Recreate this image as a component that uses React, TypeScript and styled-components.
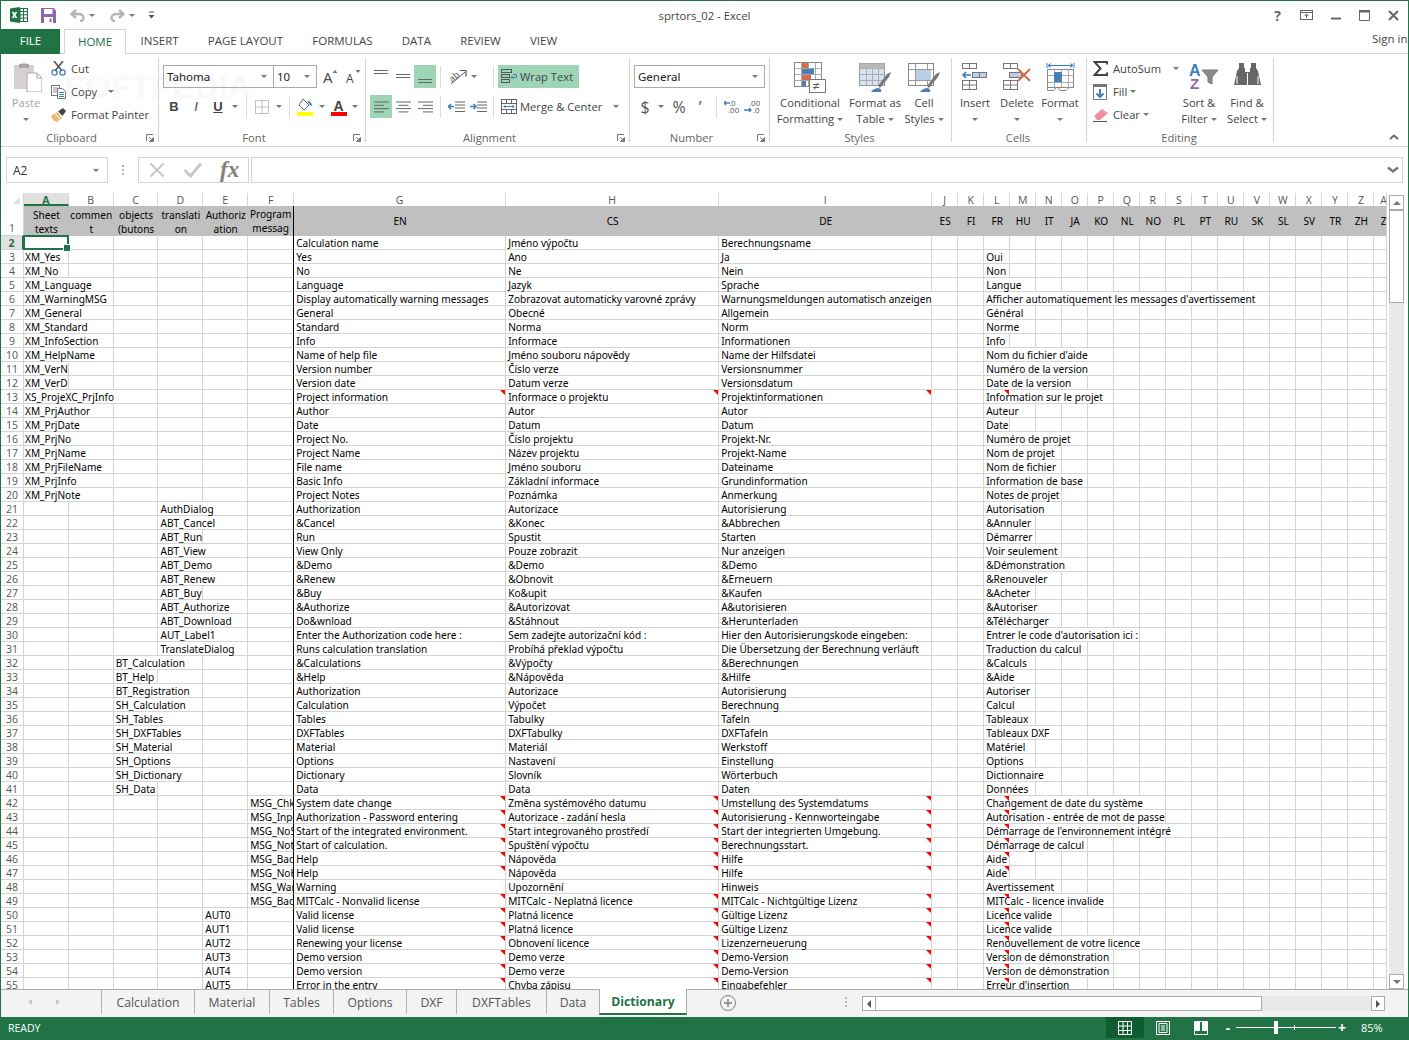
import { Fragment, ReactNode } from 'react'
import styled, { createGlobalStyle, css } from 'styled-components'

const GlobalStyle = createGlobalStyle`
  html, body { margin: 0; padding: 0; background: #fff; }
  * { box-sizing: border-box; }
`

const UI_FONT = '"Open Sans", "Noto Sans", "Liberation Sans", sans-serif'
const CELL_FONT = '"Noto Sans", "DejaVu Sans", "Liberation Sans", sans-serif'
const GREEN = '#217346'

/* ---------- sheet data ---------- */

// [column holding the key, key, EN, CS, DE, FR]
const rows: string[][] = [
  ['', '', 'Calculation name', 'Jméno výpočtu', 'Berechnungsname', ''],
  ['A', 'XM_Yes', 'Yes', 'Ano', 'Ja', 'Oui'],
  ['A', 'XM_No', 'No', 'Ne', 'Nein', 'Non'],
  ['A', 'XM_Language', 'Language', 'Jazyk', 'Sprache', 'Langue'],
  ['A', 'XM_WarningMSG', 'Display automatically warning messages', 'Zobrazovat automaticky varovné zprávy', 'Warnungsmeldungen automatisch anzeigen', "Afficher automatiquement les messages d'avertissement"],
  ['A', 'XM_General', 'General', 'Obecné', 'Allgemein', 'Général'],
  ['A', 'XM_Standard', 'Standard', 'Norma', 'Norm', 'Norme'],
  ['A', 'XM_InfoSection', 'Info', 'Informace', 'Informationen', 'Info'],
  ['A', 'XM_HelpName', 'Name of help file', 'Jméno souboru nápovědy', 'Name der Hilfsdatei', "Nom du fichier d'aide"],
  ['A', 'XM_VerN', 'Version number', 'Číslo verze', 'Versionsnummer', 'Numéro de la version'],
  ['A', 'XM_VerD', 'Version date', 'Datum verze', 'Versionsdatum', 'Date de la version'],
  ['A', 'XS_ProjeXC_PrjInfo', 'Project information', 'Informace o projektu', 'Projektinformationen', 'Information sur le projet'],
  ['A', 'XM_PrjAuthor', 'Author', 'Autor', 'Autor', 'Auteur'],
  ['A', 'XM_PrjDate', 'Date', 'Datum', 'Datum', 'Date'],
  ['A', 'XM_PrjNo', 'Project No.', 'Číslo projektu', 'Projekt-Nr.', 'Numéro de projet'],
  ['A', 'XM_PrjName', 'Project Name', 'Název projektu', 'Projekt-Name', 'Nom de projet'],
  ['A', 'XM_PrjFileName', 'File name', 'Jméno souboru', 'Dateiname', 'Nom de fichier'],
  ['A', 'XM_PrjInfo', 'Basic Info', 'Základní informace', 'Grundinformation', 'Information de base'],
  ['A', 'XM_PrjNote', 'Project Notes', 'Poznámka', 'Anmerkung', 'Notes de projet'],
  ['D', 'AuthDialog', 'Authorization', 'Autorizace', 'Autorisierung', 'Autorisation'],
  ['D', 'ABT_Cancel', '&Cancel', '&Konec', '&Abbrechen', '&Annuler'],
  ['D', 'ABT_Run', 'Run', 'Spustit', 'Starten', 'Démarrer'],
  ['D', 'ABT_View', 'View Only', 'Pouze zobrazit', 'Nur anzeigen', 'Voir seulement'],
  ['D', 'ABT_Demo', '&Demo', '&Demo', '&Demo', '&Démonstration'],
  ['D', 'ABT_Renew', '&Renew', '&Obnovit', '&Erneuern', '&Renouveler'],
  ['D', 'ABT_Buy', '&Buy', 'Ko&upit', '&Kaufen', '&Acheter'],
  ['D', 'ABT_Authorize', '&Authorize', '&Autorizovat', 'A&utorisieren', '&Autoriser'],
  ['D', 'ABT_Download', 'Do&wnload', '&Stáhnout', '&Herunterladen', '&Télécharger'],
  ['D', 'AUT_Label1', 'Enter the Authorization code here :', 'Sem zadejte autorizační kód :', 'Hier den Autorisierungskode eingeben:', "Entrer le code d'autorisation ici :"],
  ['D', 'TranslateDialog', 'Runs calculation translation', 'Probíhá překlad výpočtu', 'Die Übersetzung der Berechnung verläuft', 'Traduction du calcul'],
  ['C', 'BT_Calculation', '&Calculations', '&Výpočty', '&Berechnungen', '&Calculs'],
  ['C', 'BT_Help', '&Help', '&Nápověda', '&Hilfe', '&Aide'],
  ['C', 'BT_Registration', 'Authorization', 'Autorizace', 'Autorisierung', 'Autoriser'],
  ['C', 'SH_Calculation', 'Calculation', 'Výpočet', 'Berechnung', 'Calcul'],
  ['C', 'SH_Tables', 'Tables', 'Tabulky', 'Tafeln', 'Tableaux'],
  ['C', 'SH_DXFTables', 'DXFTables', 'DXFTabulky', 'DXFTafeln', 'Tableaux DXF'],
  ['C', 'SH_Material', 'Material', 'Materiál', 'Werkstoff', 'Matériel'],
  ['C', 'SH_Options', 'Options', 'Nastavení', 'Einstellung', 'Options'],
  ['C', 'SH_Dictionary', 'Dictionary', 'Slovník', 'Wörterbuch', 'Dictionnaire'],
  ['C', 'SH_Data', 'Data', 'Data', 'Daten', 'Données'],
  ['F', 'MSG_ChkDate', 'System date change', 'Změna systémového datumu', 'Umstellung des Systemdatums', 'Changement de date du système'],
  ['F', 'MSG_InpPass', 'Authorization - Password entering', 'Autorizace - zadání hesla', 'Autorisierung - Kennworteingabe', 'Autorisation - entrée de mot de passe'],
  ['F', 'MSG_NoStart', 'Start of the integrated environment.', 'Start integrovaného prostředí', 'Start der integrierten Umgebung.', "Démarrage de l'environnement intégré"],
  ['F', 'MSG_NotCalc', 'Start of calculation.', 'Spuštění výpočtu', 'Berechnungsstart.', 'Démarrage de calcul'],
  ['F', 'MSG_BadHelp', 'Help', 'Nápověda', 'Hilfe', 'Aide'],
  ['F', 'MSG_NoHelp', 'Help', 'Nápověda', 'Hilfe', 'Aide'],
  ['F', 'MSG_Warning', 'Warning', 'Upozornění', 'Hinweis', 'Avertissement'],
  ['F', 'MSG_BadLic', 'MITCalc - Nonvalid license', 'MITCalc - Neplatná licence', 'MITCalc - Nichtgültige Lizenz', 'MITCalc - licence invalide'],
  ['E', 'AUT0', 'Valid license', 'Platná licence', 'Gültige Lizenz', 'Licence valide'],
  ['E', 'AUT1', 'Valid license', 'Platná licence', 'Gültige Lizenz', 'Licence valide'],
  ['E', 'AUT2', 'Renewing your license', 'Obnovení licence', 'Lizenzerneuerung', 'Renouvellement de votre licence'],
  ['E', 'AUT3', 'Demo version', 'Demo verze', 'Demo-Version', 'Version de démonstration'],
  ['E', 'AUT4', 'Demo version', 'Demo verze', 'Demo-Version', 'Version de démonstration'],
  ['E', 'AUT5', 'Error in the entry', 'Chyba zápisu', 'Eingabefehler', "Erreur d'insertion"],
]

const columns = 'A B C D E F G H I J K L M N O P Q R S T U V W X Y Z AA'.split(' ')
const languages = 'ES FI FR HU IT JA KO NL NO PL PT RU SK SL SV TR ZH ZH'.split(' ')
const headLabels = ['Sheet\ntexts', 'commen\nt', 'objects\n(butons', 'translati\non', 'Authoriz\nation', 'Program\nmessag']
const noteRows = [13, 42, 43, 44, 45, 46, 47, 49, 50, 51, 52, 53, 54, 55]

/* ---------- window chrome ---------- */

const Window = styled.div`
  width: 1409px;
  height: 1040px;
  overflow: hidden;
  display: flex;
  flex-direction: column;
  position: relative;
  border: 1px solid ${GREEN};
  border-bottom: none;
  font-family: ${UI_FONT};
  color: #444;
  background: #fff;
`

const TitleBar = styled.div`
  height: 28px;
  flex: none;
  display: grid;
  grid-template-columns: 1fr auto 1fr;
  align-items: center;
`

const QuickAccess = styled.div`
  display: flex;
  align-items: center;
  padding-left: 8px;
`

const QuickSlot = styled.div<{ $w: number; $gap?: number }>`
  width: ${(p) => p.$w}px;
  margin-left: ${(p) => p.$gap ?? 0}px;
  height: 24px;
  display: flex;
  align-items: center;
  justify-content: center;
`

const WindowTitle = styled.div`
  font-size: 11.3px;
  color: #444;
`

const WindowControls = styled.div`
  display: flex;
  justify-content: flex-end;
`

const WindowButton = styled.div`
  width: 29px;
  height: 24px;
  display: flex;
  align-items: center;
  justify-content: center;
  color: #666;
  font-weight: 700;
  font-size: 14px;
`

const TabBar = styled.div`
  height: 25px;
  flex: none;
  display: flex;
  align-items: stretch;
  border-bottom: 1px solid #d4d4d4;
  font-size: 11.5px;
`

const FileTab = styled.div`
  width: 59px;
  height: 25px;
  padding-bottom: 2px;
  background: ${GREEN};
  color: #fff;
  display: flex;
  align-items: center;
  justify-content: center;
  margin-right: 4px;
`

const RibbonTab = styled.div<{ $active?: boolean }>`
  padding: 0 14.6px 2px;
  display: flex;
  align-items: center;
  height: 25px;
  color: #444;
  white-space: nowrap;
  ${(p) =>
    p.$active &&
    css`
      color: ${GREEN};
      background: #fff;
      border: 1px solid #d4d4d4;
      border-bottom: none;
      width: 62px;
      padding: 0 0 1px;
      justify-content: center;
    `}
`

const SignIn = styled.div`
  margin-left: auto;
  padding-bottom: 6px;
  display: flex;
  align-items: center;
  color: #444;
  white-space: nowrap;
  width: 36px;
`

/* ---------- ribbon ---------- */

const Ribbon = styled.div`
  height: 93px;
  flex: none;
  display: flex;
  padding-top: 4px;
  border-bottom: 1px solid #d4d4d4;
  position: relative;
  font-size: 11.2px;
`

const Watermark = styled.div`
  position: absolute;
  left: 63px;
  top: 15px;
  font-size: 32px;
  font-weight: 700;
  letter-spacing: 0.5px;
  font-family: "Liberation Sans", sans-serif;
  color: rgba(255, 255, 255, 0.6);
  text-shadow: 0 0 1px rgba(228, 228, 228, 0.5);
  pointer-events: none;
  line-height: 36px;
`

const Group = styled.div<{ $w: number }>`
  width: ${(p) => p.$w}px;
  height: 84px;
  flex: none;
  display: flex;
  flex-direction: column;
  border-right: 1px solid #d4d4d4;
  position: relative;
`

const GroupBody = styled.div<{ $pad?: number }>`
  height: 73px;
  flex: none;
  display: flex;
  padding-left: ${(p) => p.$pad ?? 0}px;
`

const GroupLabel = styled.div<{ $launch?: boolean }>`
  height: 14px;
  line-height: 14px;
  font-size: 11.2px;
  color: #666;
  text-align: center;
  padding-right: ${(p) => (p.$launch ? 16 : 2)}px;
`

const Launcher = styled.div`
  position: absolute;
  right: 4px;
  bottom: 0;
  width: 8px;
  height: 8px;
  display: flex;
`

const ToolRows = styled.div`
  display: flex;
  flex-direction: column;
  gap: 7px;
  padding-top: 7px;
`

const ToolRow = styled.div`
  display: flex;
  height: 23px;
  align-items: center;
`

const Tool = styled.div<{ $w: number; $active?: boolean }>`
  width: ${(p) => p.$w}px;
  height: 23px;
  flex: none;
  display: flex;
  align-items: center;
  justify-content: center;
  background: ${(p) => (p.$active ? '#9fd5b7' : 'transparent')};
`

const Sep = styled.div<{ $w: number }>`
  width: ${(p) => p.$w}px;
  height: 22px;
  flex: none;
  display: flex;
  justify-content: center;
  &::before {
    content: '';
    width: 1px;
    background: #dcdcdc;
  }
`

const Caret = styled.span<{ $gap?: number }>`
  display: inline-block;
  width: 0;
  height: 0;
  flex: none;
  margin-left: ${(p) => p.$gap ?? 0}px;
  border-left: 3px solid transparent;
  border-right: 3px solid transparent;
  border-top: 3px solid #777;
`

const Select = styled.div<{ $w: number; $joined?: boolean }>`
  width: ${(p) => p.$w}px;
  height: 23px;
  flex: none;
  display: flex;
  align-items: center;
  justify-content: space-between;
  padding: 0 6px 0 3px;
  border: 1px solid #ababab;
  margin-left: ${(p) => (p.$joined ? -1 : 0)}px;
  font-family: "Noto Sans", Tahoma, sans-serif;
  font-size: 11.5px;
  color: #222;
`

const TextTool = styled.div<{ $w: number; $active?: boolean }>`
  width: ${(p) => p.$w}px;
  height: 23px;
  flex: none;
  display: flex;
  align-items: center;
  padding-left: 3px;
  gap: 3px;
  white-space: nowrap;
  background: ${(p) => (p.$active ? '#9fd5b7' : 'transparent')};
`

const SmallColumn = styled.div<{ $w: number; $pad?: number }>`
  width: ${(p) => p.$w}px;
  flex: none;
  margin-top: -1px;
  padding-left: ${(p) => p.$pad ?? 0}px;
  display: flex;
  flex-direction: column;
`

const SmallButton = styled.div`
  height: 23px;
  display: flex;
  align-items: center;
  white-space: nowrap;
`

const SmallIcon = styled.div`
  width: 20px;
  flex: none;
  display: flex;
  align-items: center;
  justify-content: flex-start;
`

const LargeButton = styled.div<{ $w: number; $muted?: boolean }>`
  width: ${(p) => p.$w}px;
  flex: none;
  padding-top: 4px;
  display: flex;
  flex-direction: column;
  align-items: center;
  color: ${(p) => (p.$muted ? '#a6a6a6' : '#444')};
`

const LargeIcon = styled.div`
  height: 33px;
  display: flex;
  align-items: flex-start;
  justify-content: center;
`

const LargeLine = styled.div`
  height: 16px;
  line-height: 16px;
  white-space: nowrap;
  display: flex;
  align-items: center;
  gap: 3px;
`

const Collapse = styled.div`
  margin-left: auto;
  align-self: flex-end;
  padding: 0 9px 0 0;
  height: 14px;
  display: flex;
  align-items: center;
  position: relative;
  top: -2px;
`

/* ---------- formula bar ---------- */

const FormulaBar = styled.div`
  height: 46px;
  flex: none;
  padding: 10px 5px 10px 5px;
  display: flex;
  align-items: stretch;
`

const NameBox = styled.div`
  width: 102px;
  border: 1px solid #d4d4d4;
  display: flex;
  align-items: center;
  justify-content: space-between;
  padding: 0 8px 0 6px;
  font-size: 12px;
  color: #333;
`

const Grip = styled.div`
  width: 30px;
  display: flex;
  flex-direction: column;
  align-items: center;
  justify-content: center;
  gap: 2px;
  span {
    width: 2px;
    height: 2px;
    background: #b4b4b4;
  }
`

const FxBox = styled.div`
  width: 111px;
  border: 1px solid #d4d4d4;
  display: flex;
  align-items: center;
  padding-left: 10px;
  gap: 18px;
`

const FxLabel = styled.span`
  font-family: "Liberation Serif", serif;
  font-style: italic;
  font-weight: 700;
  font-size: 23px;
  line-height: 24px;
  color: #808080;
`

const FormulaInput = styled.div`
  flex: 1;
  margin-left: 2px;
  border: 1px solid #d4d4d4;
  display: flex;
  align-items: center;
  justify-content: flex-end;
  padding-right: 3px;
`

/* ---------- sheet ---------- */

const SheetArea = styled.div`
  height: 796px;
  flex: none;
  display: flex;
`

const Sheet = styled.div`
  width: 1386px;
  height: 796px;
  flex: none;
  overflow: hidden;
  border-right: 1px solid #d4d4d4;
`

const SheetGrid = styled.div`
  display: grid;
  grid-template-columns: 23px repeat(5, 44.83px) 46px 212px repeat(2, 213px) repeat(18, 26.03px);
  grid-template-rows: 13px 30px repeat(54, 14px);
  font-family: ${CELL_FONT};
  font-size: 10.1px;
  color: #000;
`

const Corner = styled.div`
  border-right: 1px solid #d4d4d4;
  position: relative;
  &::after {
    content: '';
    position: absolute;
    right: 3px;
    bottom: 2px;
    border-left: 7px solid transparent;
    border-bottom: 7px solid #dfdfdf;
  }
`

const ColHead = styled.div<{ $active?: boolean }>`
  text-align: center;
  font-family: ${UI_FONT};
  font-size: 10.5px;
  line-height: 15px;
  overflow: hidden;
  color: ${(p) => (p.$active ? GREEN : '#555')};
  font-weight: ${(p) => (p.$active ? 700 : 400)};
  background: ${(p) => (p.$active ? '#e1e1e1' : '#fff')};
  border-right: 1px solid #d4d4d4;
  border-bottom: ${(p) => (p.$active ? `2px solid ${GREEN}` : 'none')};
`

const RowHead = styled.div<{ $active?: boolean; $tall?: boolean }>`
  display: flex;
  align-items: flex-start;
  justify-content: center;
  padding-top: ${(p) => (p.$tall ? 15 : 0)}px;
  font-family: ${UI_FONT};
  font-size: 10.5px;
  line-height: 15px;
  overflow: hidden;
  color: ${(p) => (p.$active ? GREEN : '#555')};
  font-weight: ${(p) => (p.$active ? 700 : 400)};
  background: ${(p) => (p.$active ? '#e1e1e1' : '#fff')};
  border-right: ${(p) => (p.$active ? `2px solid ${GREEN}` : '1px solid #d4d4d4')};
  border-bottom: 1px solid #d4d4d4;
`

const BandCell = styled.div<{ $edge?: boolean; $middle?: boolean }>`
  background: #c0c0c0;
  display: flex;
  align-items: ${(p) => (p.$middle ? 'center' : 'flex-end')};
  justify-content: center;
  text-align: center;
  white-space: pre-line;
  line-height: 14px;
  overflow: hidden;
  padding-bottom: ${(p) => (p.$edge ? 1 : 0)}px;
  border-right: ${(p) => (p.$edge ? '1px solid #000' : 'none')};
`

const Cell = styled.div<{ $clip?: boolean; $edge?: boolean; $note?: boolean; $anchor?: boolean; $pad?: number }>`
  position: ${(p) => (p.$note || p.$anchor ? 'relative' : 'static')};
  padding-left: ${(p) => p.$pad ?? 2}px;
  line-height: 13px;
  white-space: nowrap;
  overflow: ${(p) => (p.$clip ? 'hidden' : 'visible')};
  border-right: 1px solid ${(p) => (p.$edge ? '#000' : '#d4d4d4')};
  border-bottom: 1px solid #d4d4d4;
  ${(p) =>
    p.$note &&
    css`
      &::after {
        content: '';
        position: absolute;
        z-index: 2;
        top: 0;
        right: 0;
        border-left: 5px solid transparent;
        border-top: 5px solid #f00;
      }
    `}
`

// white plate that hides the gridlines of the empty cells a long text runs over
const CellMask = styled.span`
  position: relative;
  display: inline-block;
  height: 13px;
  vertical-align: top;
  background: #fff;
`

// the ink sits above every plate, so a row's plate can't eat the descenders of the row above
const CellInk = styled.span`
  position: relative;
  z-index: 1;
  display: block;
  line-height: 15px;
  height: 13px;
`

const Selection = styled.div`
  position: absolute;
  z-index: 3;
  left: -1px;
  top: -1px;
  width: 46px;
  height: 15px;
  border: 2px solid ${GREEN};
  &::after {
    content: '';
    position: absolute;
    right: -4px;
    bottom: -4px;
    width: 6px;
    height: 6px;
    background: ${GREEN};
    border: 1px solid #fff;
  }
`

const VScroll = styled.div`
  width: 15px;
  margin: 2px 0 0 2px;
  background: #e9e9e9;
  display: flex;
  flex-direction: column;
`

const ScrollEnd = styled.div<{ $w?: number; $h?: number }>`
  width: ${(p) => (p.$w ? `${p.$w}px` : 'auto')};
  height: ${(p) => (p.$h ? `${p.$h}px` : 'auto')};
  background: #fff;
  border: 1px solid #ababab;
  flex: none;
  display: flex;
  align-items: center;
  justify-content: center;
`

const Arrow = styled.span<{ $dir: 'up' | 'down' | 'left' | 'right' }>`
  width: 0;
  height: 0;
  ${(p) =>
    p.$dir === 'up' &&
    css`
      border-left: 4px solid transparent;
      border-right: 4px solid transparent;
      border-bottom: 4px solid #777;
    `}
  ${(p) =>
    p.$dir === 'down' &&
    css`
      border-left: 4px solid transparent;
      border-right: 4px solid transparent;
      border-top: 4px solid #777;
    `}
  ${(p) =>
    p.$dir === 'left' &&
    css`
      border-top: 4px solid transparent;
      border-bottom: 4px solid transparent;
      border-right: 4px solid #555;
    `}
  ${(p) =>
    p.$dir === 'right' &&
    css`
      border-top: 4px solid transparent;
      border-bottom: 4px solid transparent;
      border-left: 4px solid #555;
    `}
`

const VThumb = styled.div`
  height: 93px;
  background: #fff;
  border: 1px solid #ababab;
  flex: none;
`

const ScrollFill = styled.div`
  flex: 1;
`

/* ---------- sheet tabs and status bar ---------- */

const SheetTabs = styled.div`
  height: 28px;
  flex: none;
  display: flex;
  align-items: flex-start;
  background: #f3f3f3;
  border-top: 1px solid #ababab;
  font-size: 12.2px;
`

const TabNav = styled.div`
  width: 100px;
  height: 24px;
  display: flex;
  align-items: center;
  gap: 24px;
  padding-left: 27px;
  flex: none;
`

const NavArrow = styled.span<{ $next?: boolean }>`
  width: 0;
  height: 0;
  border-top: 3px solid transparent;
  border-bottom: 3px solid transparent;
  ${(p) => (p.$next ? 'border-left: 4px solid #c4c4c4;' : 'border-right: 4px solid #c4c4c4;')}
`

const SheetTab = styled.div<{ $active?: boolean; $w?: number }>`
  height: 24px;
  width: ${(p) => p.$w}px;
  display: flex;
  align-items: center;
  justify-content: center;
  white-space: nowrap;
  color: #555;
  border-left: 1px solid #b4b4b4;
  flex: none;
  ${(p) =>
    p.$active &&
    css`
      position: relative;
      top: -1px;
      height: 26px;
      padding-top: 1px;
      background: #fff;
      color: ${GREEN};
      font-weight: 700;
      border-left: 1px solid #ababab;
      border-right: 1px solid #ababab;
      border-bottom: 2px solid ${GREEN};
    `}
`

const AddSheet = styled.div`
  width: 16px;
  height: 16px;
  margin: 5px 0 0 33px;
  border: 1px solid #808080;
  border-radius: 50%;
  display: flex;
  align-items: center;
  justify-content: center;
  flex: none;
`

const TabGrip = styled(Grip)`
  width: 4px;
  height: 24px;
  margin-left: 108px;
  flex: none;
`

const HScroll = styled.div`
  width: 523px;
  height: 15px;
  margin: 6px 0 0 14px;
  flex: none;
  display: flex;
  background: #e9e9e9;
`

const HThumb = styled.div`
  width: 386px;
  background: #fff;
  border: 1px solid #ababab;
  border-left: none;
  flex: none;
`

const StatusBar = styled.div`
  height: 23px;
  flex: none;
  background: ${GREEN};
  color: #fff;
  display: flex;
  align-items: center;
  font-size: 10.5px;
  padding: 0 0 2px 7px;
`

const StatusRight = styled.div`
  margin-left: auto;
  display: flex;
  align-items: center;
  height: 23px;
`

const ViewButton = styled.div<{ $active?: boolean }>`
  width: 38px;
  height: 21px;
  display: flex;
  align-items: center;
  justify-content: center;
  background: ${(p) => (p.$active ? '#0e5c2f' : 'transparent')};
`

const ZoomSlider = styled.div`
  display: flex;
  align-items: center;
  margin-left: 4px;
`

const ZoomSign = styled.span`
  font-weight: 700;
  font-size: 14px;
  width: 8px;
  text-align: center;
`

const ZoomTrack = styled.div`
  width: 100px;
  height: 1px;
  margin: 0 2px 0 4px;
  background: #fff;
  position: relative;
`

const ZoomThumb = styled.div`
  position: absolute;
  left: 38px;
  top: -6px;
  width: 4px;
  height: 13px;
  background: #fff;
`

const ZoomTick = styled.div`
  position: absolute;
  left: 58px;
  top: -2px;
  width: 1px;
  height: 5px;
  background: #fff;
`

const ZoomValue = styled.div`
  width: 47px;
  margin-left: 15px;
  font-size: 11px;
  color: #fff;
`

/* ---------- icons ---------- */

const Svg = ({ w, h, children }: { w: number; h: number; children: ReactNode }) => (
  <svg width={w} height={h} viewBox={`0 0 ${w} ${h}`} style={{ display: 'block', flex: 'none' }}>
    {children}
  </svg>
)

const ExcelLogo = () => (
  <Svg w={18} h={16}>
    <rect x="6.5" y="1.5" width="11" height="13" fill="#fff" stroke="#217346" />
    <path d="M10 1.5v13M13.5 1.5v13M7 4.5h10M7 7.8h10M7 11.1h10" stroke="#217346" strokeWidth="1" />
    <path d="M0 1.5L10 0v16L0 14.5z" fill="#217346" />
    <path d="M2.5 5l4 6M6.5 5l-4 6" stroke="#fff" strokeWidth="1.6" />
  </Svg>
)

const SaveIcon = () => (
  <Svg w={15} h={15}>
    <path d="M0 0h12.5L15 2.5V15H0z" fill="#8e64b0" />
    <rect x="3" y="1" width="8.5" height="5" fill="#fff" />
    <rect x="3" y="9" width="9" height="6" fill="#fff" />
    <rect x="8.5" y="10.5" width="2" height="3.5" fill="#8e64b0" />
  </Svg>
)

const UndoIcon = ({ flip }: { flip?: boolean }) => (
  <Svg w={15} h={13}>
    <g transform={flip ? 'translate(15 0) scale(-1 1)' : undefined}>
      <path d="M6 1L1.5 5 6 9" fill="none" stroke="#b4b4b4" strokeWidth="2.4" />
      <path d="M2 5h7c3 0 4.5 2 4.5 4S12 12 10 12.5" fill="none" stroke="#b4b4b4" strokeWidth="2.4" />
    </g>
  </Svg>
)

const CustomizeIcon = () => (
  <Svg w={7} h={8}>
    <path d="M1 1h5" stroke="#555" />
    <path d="M0.5 4h6L3.5 7.5z" fill="#555" />
  </Svg>
)

const PasteIcon = () => (
  <Svg w={32} h={30}>
    <g transform="translate(3 0)">
      <path d="M1 3h7V1h6v2h7v24H1z" fill="#d6d2d4" />
      <rect x="6" y="2" width="10" height="4" fill="#a8a6a8" />
      <path d="M14 11h10l5 5v14H14z" fill="#fff" stroke="#a6a6a6" />
      <path d="M24 11v5h5" fill="none" stroke="#a6a6a6" />
    </g>
  </Svg>
)

const CutIcon = () => (
  <Svg w={15} h={15}>
    <path d="M3 0l8 10M12 0L4 10" stroke="#555" strokeWidth="1.6" />
    <circle cx="3.5" cy="11.5" r="2.6" fill="none" stroke="#3f7fc0" strokeWidth="1.3" />
    <circle cx="11.5" cy="11.5" r="2.6" fill="none" stroke="#3f7fc0" strokeWidth="1.3" />
  </Svg>
)

const CopyIcon = () => (
  <Svg w={15} h={14}>
    <rect x="0.5" y="0.5" width="8" height="10" fill="#fff" stroke="#777" />
    <path d="M2 3h5M2 5h5M2 7h5" stroke="#999" />
    <path d="M6.5 3.5h5l3 3v7h-8z" fill="#fff" stroke="#777" />
    <path d="M8 7.5h5M8 9.5h5M8 11.5h5" stroke="#3f7fc0" />
  </Svg>
)

const PainterIcon = () => (
  <Svg w={16} h={14}>
    <path d="M0 8l6-4 5 6-5 4c-2 0-5-3-6-6z" fill="#e8b878" />
    <path d="M4 5.5l5 5.5" stroke="#fff" />
    <path d="M7 3.5L12 0l3 3-3.5 5z" fill="#444" />
  </Svg>
)

const Launch = () => (
  <Launcher>
    <Svg w={8} h={8}>
      <path d="M0.5 7V0.5H7" fill="none" stroke="#777" />
      <path d="M3 3l3.5 3.5M7.5 3.5v4h-4z" fill="#777" stroke="#777" />
    </Svg>
  </Launcher>
)

const GrowIcon = ({ up }: { up?: boolean }) => (
  <Svg w={15} h={15}>
    <text x="0" y="14" fontSize={up ? 15 : 12} fontFamily="Open Sans" fill="#444">A</text>
    <path d={up ? 'M9.5 4L12 1l2.5 3z' : 'M9.5 1h5L12 4z'} fill="#4a7fb8" />
  </Svg>
)

const FontMark = styled.span<{ $italic?: boolean; $under?: boolean }>`
  font-family: "Liberation Sans", sans-serif;
  font-weight: ${(p) => (p.$italic ? 400 : 700)};
  font-style: ${(p) => (p.$italic ? 'italic' : 'normal')};
  text-decoration: ${(p) => (p.$under ? 'underline' : 'none')};
  font-size: 13px;
  color: #444;
`

const BordersIcon = () => (
  <Svg w={14} h={14}>
    <path d="M0.5 0.5h13v13h-13zM7 0.5v13M0.5 7h13" fill="none" stroke="#888" strokeDasharray="1 1" />
  </Svg>
)

const FillIcon = () => (
  <Svg w={17} h={18}>
    <path d="M6 1l6 6-5 5-5-5z" fill="#fff" stroke="#666" />
    <path d="M10 3c3 0 5 2 5 5l-2-1z" fill="#3f7fc0" />
    <rect x="0" y="14" width="16" height="4" fill="#ff0" />
  </Svg>
)

const FontColorIcon = () => (
  <Svg w={16} h={18}>
    <text x="2.5" y="12.5" fontSize="14" fontWeight="700" fontFamily="Liberation Sans" fill="#444">A</text>
    <rect x="0" y="14" width="16" height="4" fill="#f00" />
  </Svg>
)

const VAlignIcon = ({ ys }: { ys: number[] }) => (
  <Svg w={14} h={16}>
    {ys.map((y) => (
      <path key={y} d={`M0 ${y + 0.5}h14`} stroke="#666" />
    ))}
  </Svg>
)

const HAlignIcon = ({ align }: { align: 'left' | 'center' | 'right' }) => (
  <Svg w={15} h={12}>
    {[15, 10, 15, 10].map((width, i) => {
      const x = align === 'left' ? 0 : align === 'right' ? 15 - width : (15 - width) / 2
      return <path key={i} d={`M${x} ${i * 3.3 + 1}h${width}`} stroke="#666" />
    })}
  </Svg>
)

const OrientIcon = () => (
  <Svg w={19} h={17}>
    <text x="1" y="12" fontSize="9" fontFamily="Open Sans" fill="#555" transform="rotate(-40 6 9)">ab</text>
    <path d="M3 16L17 4" stroke="#555" />
    <path d="M12 2.5h6v6" fill="none" stroke="#555" strokeWidth="1.2" />
  </Svg>
)

const IndentIcon = ({ inc }: { inc?: boolean }) => (
  <Svg w={17} h={12}>
    <path d="M7 1h10M7 4h10M7 7h10M7 10.5h10" stroke="#666" />
    <path d={inc ? 'M0 5.5h6M3.5 3l2.5 2.5L3.5 8' : 'M6 5.5H0.5M3 3L0.5 5.5 3 8'} fill="none" stroke="#3f7fc0" strokeWidth="1.6" />
  </Svg>
)

const WrapIcon = () => (
  <Svg w={16} h={15}>
    <rect x="0.5" y="0.5" width="10" height="3" fill="none" stroke="#555" />
    <rect x="0.5" y="5.5" width="8" height="3" fill="none" stroke="#555" />
    <rect x="0.5" y="10.5" width="8" height="3" fill="none" stroke="#555" />
    <path d="M12 5.5h3.5v3H10M12 6.5L10 8.5l2 2" fill="none" stroke="#3f7fc0" />
  </Svg>
)

const MergeIcon = () => (
  <Svg w={16} h={15}>
    <rect x="0.5" y="0.5" width="15" height="14" fill="#fff" stroke="#666" />
    <path d="M0.5 4.5h15M0.5 10.5h15M5.5 0.5v4M10.5 0.5v4M5.5 10.5v4M10.5 10.5v4" stroke="#666" />
    <path d="M3 7.5h10M4.5 6L3 7.5 4.5 9M11.5 6L13 7.5 11.5 9" fill="none" stroke="#3f7fc0" />
  </Svg>
)

const NumberMark = styled.span<{ $size?: number }>`
  font-family: "Open Sans", sans-serif;
  font-size: ${(p) => p.$size ?? 16}px;
  line-height: 16px;
  color: #555;
`

const DecimalIcon = ({ more }: { more?: boolean }) => (
  <Svg w={16} h={15}>
    <text x="5" y="6.5" fontSize="8" fontFamily="Open Sans" fill="#555">{more ? '.00' : '.0'}</text>
    <text x={more ? 9 : 4} y="14" fontSize="8" fontFamily="Open Sans" fill="#555">{more ? '.0' : '.00'}</text>
    <path d={more ? 'M0 11h7M5 9l2 2-2 2' : 'M0 4h6M2 2L0 4l2 2'} fill="none" stroke="#3f7fc0" strokeWidth="1.3" />
  </Svg>
)

const CondIcon = () => (
  <Svg w={33} h={31}>
    <rect x="0.5" y="0.5" width="27" height="24" fill="#fff" stroke="#888" />
    <path d="M7.5 0.5v24M14.5 0.5v24M21.5 0.5v24M0.5 6.5h27M0.5 12.5h27M0.5 18.5h27" stroke="#aaa" />
    <rect x="8" y="1" width="6" height="5" fill="#d9694a" />
    <rect x="8" y="7" width="12" height="5" fill="#4a7fb8" />
    <rect x="8" y="13" width="9" height="5" fill="#d9694a" />
    <rect x="8" y="19" width="4" height="5" fill="#4a7fb8" />
    <rect x="15.5" y="17.5" width="16" height="13" fill="#fff" stroke="#777" />
    <text x="19" y="28" fontSize="12" fontFamily="Liberation Sans" fill="#555">≠</text>
  </Svg>
)

const Brush = () => (
  <>
    <path d="M20 26c-3 0-6 1-8 4h10c1-1 0-3-2-4z" fill="#4a7fb8" />
    <path d="M19 24l9-12 4-2-2 5-9 11z" fill="#777" />
  </>
)

const TableIcon = () => (
  <Svg w={32} h={30}>
    <rect x="0.5" y="1.5" width="25" height="22" fill="#d6e2f0" stroke="#999" />
    <path d="M0.5 6.5h25M0.5 12.5h25M0.5 18.5h25M7.5 1.5v22M13.5 1.5v22M19.5 1.5v22" stroke="#aab" />
    <rect x="0.5" y="1.5" width="25" height="5" fill="#b8b8b8" />
    <Brush />
  </Svg>
)

const CellStyleIcon = () => (
  <Svg w={32} h={30}>
    <rect x="0.5" y="1.5" width="25" height="22" fill="#fff" stroke="#888" />
    <path d="M0.5 7.5h25M0.5 18.5h25M7.5 1.5v22M19.5 1.5v22" stroke="#999" />
    <rect x="8" y="8" width="15" height="10" fill="#b8cfe6" />
    <Brush />
  </Svg>
)

const InsertIcon = () => (
  <Svg w={28} h={28}>
    <rect x="1.5" y="1.5" width="14" height="5" fill="#fff" stroke="#777" />
    <path d="M8.5 1.5v5" stroke="#777" />
    <rect x="11.5" y="10.5" width="14" height="5" fill="#b8cfe6" stroke="#777" />
    <path d="M18.5 10.5v5" stroke="#777" />
    <path d="M10 13H2M5 10L2 13l3 3" fill="none" stroke="#3f7fc0" strokeWidth="1.6" />
    <rect x="1.5" y="18.5" width="14" height="9" fill="#fff" stroke="#777" />
    <path d="M8.5 18.5v9M1.5 23h14" stroke="#777" />
  </Svg>
)

const DeleteIcon = () => (
  <Svg w={30} h={28}>
    <rect x="1.5" y="1.5" width="14" height="5" fill="#fff" stroke="#777" />
    <path d="M8.5 1.5v5" stroke="#777" />
    <rect x="7.5" y="10.5" width="12" height="5" fill="#b8cfe6" stroke="#777" />
    <rect x="1.5" y="18.5" width="14" height="9" fill="#fff" stroke="#777" />
    <path d="M8.5 18.5v9M1.5 23h14" stroke="#777" />
    <path d="M16 7l12 12M28 7L16 19" stroke="#d9694a" strokeWidth="2" />
  </Svg>
)

const FormatIcon = () => (
  <Svg w={29} h={30}>
    <path d="M1 1v5M28 1v5M2 3.5h25M5 1.5L2 3.5l3 2M24 1.5l3 2-3 2" fill="none" stroke="#3f7fc0" />
    <rect x="1.5" y="7.5" width="26" height="18" fill="#fff" stroke="#888" />
    <path d="M1.5 13.5h26M1.5 20.5h26M8.5 7.5v18M15.5 7.5v18M22.5 7.5v18" stroke="#aaa" />
    <rect x="8" y="10" width="8" height="10" fill="#4a7fb8" />
    <path d="M1.5 25.5v3h6l3-3M12 25.5l2 3h6l3-3" fill="none" stroke="#888" />
  </Svg>
)

const SigmaIcon = () => (
  <Svg w={16} h={15}>
    <path d="M14 3.5V1H1.5l6 6.5-6 6.5H14v-2.5" fill="none" stroke="#444" strokeWidth="2" />
  </Svg>
)

const DownFillIcon = () => (
  <Svg w={15} h={16}>
    <rect x="0.5" y="0.5" width="13" height="15" fill="#fff" stroke="#777" />
    <rect x="0" y="0" width="14" height="3" fill="#777" />
    <path d="M7 5v8M3.5 9.5L7 13l3.5-3.5" fill="none" stroke="#3f7fc0" strokeWidth="2" />
  </Svg>
)

const EraserIcon = () => (
  <Svg w={16} h={14}>
    <path d="M1 8l8-7 6 4-8 7H4z" fill="#ef8fa0" />
    <path d="M0 13.5h14" stroke="#555" />
  </Svg>
)

const SortIcon = () => (
  <Svg w={39} h={28}>
    <g transform="translate(9 0)">
      <text x="0" y="14" fontSize="16" fontWeight="700" fontFamily="Liberation Sans" fill="#3f7fc0">A</text>
      <text x="1" y="27" fontSize="15" fontWeight="700" fontFamily="Liberation Sans" fill="#8e64b0">Z</text>
      <path d="M13 8h16l-6 7v7l-4-2v-5z" fill="#8a8a8a" stroke="#777" />
    </g>
  </Svg>
)

const BinocularsIcon = () => (
  <Svg w={27} h={24}>
    <path d="M5 1h5v5h1v4h5V6h1V1h5v5l2 3 3 14H14V11h-1v12H0L3 9l2-3z" fill="#666" />
    <path d="M3 14v8M24 14v8" stroke="#fff" />
  </Svg>
)

const LargeCross = () => (
  <Svg w={16} h={16}>
    <path d="M1.5 1.5l13 13M14.5 1.5l-13 13" stroke="#c8c8c8" strokeWidth="2" />
  </Svg>
)

const LargeCheck = () => (
  <Svg w={19} h={16}>
    <path d="M1.5 8l6 6L18 1.5" fill="none" stroke="#c8c8c8" strokeWidth="3" />
  </Svg>
)

const ChevronDown = () => (
  <Svg w={12} h={8}>
    <path d="M1 1.5l5 4 5-4" fill="none" stroke="#777" strokeWidth="2.4" />
  </Svg>
)

const ChevronUp = () => (
  <Svg w={10} h={6}>
    <path d="M1 5l4-3.5L9 5" fill="none" stroke="#666" strokeWidth="1.8" />
  </Svg>
)

const RibbonDisplayIcon = () => (
  <Svg w={13} h={10}>
    <rect x="0.5" y="0.5" width="12" height="9" fill="none" stroke="#666" />
    <path d="M0.5 2.5h12" stroke="#666" />
    <path d="M6.5 8V4M4.5 6l2-2 2 2" fill="none" stroke="#666" />
  </Svg>
)

const NormalViewIcon = () => (
  <Svg w={14} h={14}>
    <path d="M0.5 0.5h13v13H0.5zM5 0.5v13M9.5 0.5v13M0.5 5h13M0.5 9.5h13" fill="none" stroke="#fff" />
  </Svg>
)

const PageViewIcon = () => (
  <Svg w={14} h={14}>
    <path d="M0.5 0.5h13v13H0.5z" fill="none" stroke="#fff" />
    <path d="M3 2.5h8v9H3zM5 5h4M5 7h4M5 9h4" fill="none" stroke="#fff" />
  </Svg>
)

const BreakViewIcon = () => (
  <Svg w={14} h={14}>
    <path d="M0.5 0.5h13v13H0.5z" fill="none" stroke="#fff" />
    <rect x="1" y="1" width="5" height="9" fill="#fff" />
    <rect x="8" y="1" width="5" height="9" fill="#fff" />
  </Svg>
)

const PlusIcon = () => (
  <Svg w={10} h={10}>
    <path d="M5 1v8M1 5h8" stroke="#808080" strokeWidth="1.4" />
  </Svg>
)

/* ---------- page ---------- */

const tabs = ['INSERT', 'PAGE LAYOUT', 'FORMULAS', 'DATA', 'REVIEW', 'VIEW']
const sheets: [string, number][] = [
  ['Calculation', 93],
  ['Material', 75],
  ['Tables', 64],
  ['Options', 73],
  ['DXF', 50],
  ['DXFTables', 90],
  ['Data', 53],
]

const Large = ({ w, icon, lines, caret, muted }: { w: number; icon: ReactNode; lines: string[]; caret?: boolean; muted?: boolean }) => (
  <LargeButton $w={w} $muted={muted}>
    <LargeIcon>{icon}</LargeIcon>
    {lines.map((line, i) => (
      <LargeLine key={line}>
        {line}
        {caret && i === lines.length - 1 && <Caret />}
      </LargeLine>
    ))}
    {lines.length === 1 && (
      <LargeLine>
        <Caret />
      </LargeLine>
    )}
  </LargeButton>
)

const CellValue = ({ text }: { text: string }) => (
  <CellMask>
    <CellInk>{text}</CellInk>
  </CellMask>
)

const App = () => (
  <Window>
    <GlobalStyle />
    <TitleBar>
      <QuickAccess>
        <QuickSlot $w={20}><ExcelLogo /></QuickSlot>
        <QuickSlot $w={38}><SaveIcon /></QuickSlot>
        <QuickSlot $w={20}><UndoIcon /></QuickSlot>
        <QuickSlot $w={10}><Caret /></QuickSlot>
        <QuickSlot $w={20} $gap={10}><UndoIcon flip /></QuickSlot>
        <QuickSlot $w={10}><Caret /></QuickSlot>
        <QuickSlot $w={28}><CustomizeIcon /></QuickSlot>
      </QuickAccess>
      <WindowTitle>sprtors_02 - Excel</WindowTitle>
      <WindowControls>
        <WindowButton>?</WindowButton>
        <WindowButton><RibbonDisplayIcon /></WindowButton>
        <WindowButton><Svg w={10} h={10}><path d="M0 8.5h10" stroke="#666" strokeWidth="2" /></Svg></WindowButton>
        <WindowButton><Svg w={11} h={11}><path d="M0.5 2h10v8.5H0.5z" fill="none" stroke="#666" /><path d="M0 1h11" stroke="#666" strokeWidth="2" /></Svg></WindowButton>
        <WindowButton><Svg w={11} h={11}><path d="M1 1l9 9M10 1l-9 9" stroke="#666" strokeWidth="2" /></Svg></WindowButton>
      </WindowControls>
    </TitleBar>

    <TabBar>
      <FileTab>FILE</FileTab>
      <RibbonTab $active>HOME</RibbonTab>
      {tabs.map((t) => (
        <RibbonTab key={t}>{t}</RibbonTab>
      ))}
      <SignIn>Sign in</SignIn>
    </TabBar>

    <Ribbon>
      <Watermark>SOFTPEDIA</Watermark>

      <Group $w={158}>
        <GroupBody>
          <Large w={50} icon={<PasteIcon />} lines={['Paste']} muted />
          <SmallColumn $w={106}>
            <SmallButton><SmallIcon><CutIcon /></SmallIcon>Cut</SmallButton>
            <SmallButton><SmallIcon><CopyIcon /></SmallIcon>Copy<Caret $gap={11} /></SmallButton>
            <SmallButton><SmallIcon><PainterIcon /></SmallIcon>Format Painter</SmallButton>
          </SmallColumn>
        </GroupBody>
        <GroupLabel $launch>Clipboard</GroupLabel>
        <Launch />
      </Group>

      <Group $w={207}>
        <GroupBody $pad={4}>
          <ToolRows>
            <ToolRow>
              <Select $w={111}>Tahoma<Caret /></Select>
              <Select $w={44} $joined>10<Caret /></Select>
              <Tool $w={26}><GrowIcon up /></Tool>
              <Tool $w={20}><GrowIcon /></Tool>
            </ToolRow>
            <ToolRow>
              <Tool $w={22}><FontMark>B</FontMark></Tool>
              <Tool $w={22}><FontMark $italic>I</FontMark></Tool>
              <Tool $w={22}><FontMark $under>U</FontMark></Tool>
              <Tool $w={12}><Caret /></Tool>
              <Sep $w={10} />
              <Tool $w={22}><BordersIcon /></Tool>
              <Tool $w={12}><Caret /></Tool>
              <Sep $w={8} />
              <Tool $w={24}><FillIcon /></Tool>
              <Tool $w={10}><Caret /></Tool>
              <Tool $w={24}><FontColorIcon /></Tool>
              <Tool $w={8}><Caret /></Tool>
            </ToolRow>
          </ToolRows>
        </GroupBody>
        <GroupLabel $launch>Font</GroupLabel>
        <Launch />
      </Group>

      <Group $w={264}>
        <GroupBody $pad={4}>
          <ToolRows>
            <ToolRow>
              <Tool $w={22}><VAlignIcon ys={[1, 4]} /></Tool>
              <Tool $w={22}><VAlignIcon ys={[5, 8]} /></Tool>
              <Tool $w={22} $active><VAlignIcon ys={[10, 13]} /></Tool>
              <Sep $w={9} />
              <Tool $w={24}><OrientIcon /></Tool>
              <Tool $w={9}><Caret /></Tool>
              <Tool $w={10} />
              <Sep $w={10} />
              <TextTool $w={81} $active><WrapIcon />Wrap Text</TextTool>
            </ToolRow>
            <ToolRow>
              <Tool $w={22} $active><HAlignIcon align="left" /></Tool>
              <Tool $w={22}><HAlignIcon align="center" /></Tool>
              <Tool $w={22}><HAlignIcon align="right" /></Tool>
              <Sep $w={9} />
              <Tool $w={23}><IndentIcon /></Tool>
              <Tool $w={20}><IndentIcon inc /></Tool>
              <Sep $w={10} />
              <TextTool $w={124}><MergeIcon />Merge &amp; Center<Caret $gap={8} /></TextTool>
            </ToolRow>
          </ToolRows>
        </GroupBody>
        <GroupLabel $launch>Alignment</GroupLabel>
        <Launch />
      </Group>

      <Group $w={140}>
        <GroupBody $pad={4}>
          <ToolRows>
            <ToolRow>
              <Select $w={131}>General<Caret /></Select>
            </ToolRow>
            <ToolRow>
              <Tool $w={22}><NumberMark>$</NumberMark></Tool>
              <Tool $w={10}><Caret /></Tool>
              <Tool $w={2} />
              <Tool $w={22}><NumberMark>%</NumberMark></Tool>
              <Tool $w={20}><NumberMark>’</NumberMark></Tool>
              <Sep $w={12} />
              <Tool $w={20}><DecimalIcon /></Tool>
              <Tool $w={20}><DecimalIcon more /></Tool>
            </ToolRow>
          </ToolRows>
        </GroupBody>
        <GroupLabel $launch>Number</GroupLabel>
        <Launch />
      </Group>

      <Group $w={182}>
        <GroupBody>
          <Large w={80} icon={<CondIcon />} lines={['Conditional', 'Formatting']} caret />
          <Large w={50} icon={<TableIcon />} lines={['Format as', 'Table']} caret />
          <Large w={48} icon={<CellStyleIcon />} lines={['Cell', 'Styles']} caret />
        </GroupBody>
        <GroupLabel>Styles</GroupLabel>
      </Group>

      <Group $w={135}>
        <GroupBody>
          <Large w={46} icon={<InsertIcon />} lines={['Insert']} />
          <Large w={38} icon={<DeleteIcon />} lines={['Delete']} />
          <Large w={48} icon={<FormatIcon />} lines={['Format']} />
        </GroupBody>
        <GroupLabel>Cells</GroupLabel>
      </Group>

      <Group $w={187}>
        <GroupBody>
          <SmallColumn $w={88} $pad={6}>
            <SmallButton><SmallIcon><SigmaIcon /></SmallIcon>AutoSum<Caret $gap={12} /></SmallButton>
            <SmallButton><SmallIcon><DownFillIcon /></SmallIcon>Fill<Caret $gap={3} /></SmallButton>
            <SmallButton><SmallIcon><EraserIcon /></SmallIcon>Clear<Caret $gap={3} /></SmallButton>
          </SmallColumn>
          <Large w={48} icon={<SortIcon />} lines={['Sort &', 'Filter']} caret />
          <Large w={48} icon={<BinocularsIcon />} lines={['Find &', 'Select']} caret />
        </GroupBody>
        <GroupLabel>Editing</GroupLabel>
      </Group>

      <Collapse><ChevronUp /></Collapse>
    </Ribbon>

    <FormulaBar>
      <NameBox>A2<Caret /></NameBox>
      <Grip><span /><span /><span /></Grip>
      <FxBox>
        <LargeCross />
        <LargeCheck />
        <FxLabel>fx</FxLabel>
      </FxBox>
      <FormulaInput><ChevronDown /></FormulaInput>
    </FormulaBar>

    <SheetArea>
      <Sheet>
        <SheetGrid>
          <Corner />
          {columns.map((c) => (
            <ColHead key={c} $active={c === 'A'}>{c}</ColHead>
          ))}

          <RowHead $tall>1</RowHead>
          {headLabels.map((label, i) => (
            <BandCell key={label} $edge={i === 5}>{label}</BandCell>
          ))}
          {['EN', 'CS', 'DE', ...languages].map((label, i) => (
            <BandCell key={`${label}${i}`} $middle>{label}</BandCell>
          ))}

          {rows.map(([keyCol, key, en, cs, de, fr], i) => {
            const rowNo = i + 2
            const note = noteRows.includes(rowNo)
            return (
              <Fragment key={rowNo}>
                <RowHead $active={rowNo === 2}>{rowNo}</RowHead>
                {'ABCDEF'.split('').map((c) => (
                  <Cell
                    key={c}
                    $edge={c === 'F'}
                    $clip={c === keyCol && c === 'F'}
                    $anchor={rowNo === 2 && c === 'A'}
                    $pad={c === 'A' ? 1 : 2}
                  >
                    {c === keyCol && <CellValue text={key} />}
                    {rowNo === 2 && c === 'A' && <Selection />}
                  </Cell>
                ))}
                <Cell $note={note}><CellValue text={en} /></Cell>
                <Cell $note={note}><CellValue text={cs} /></Cell>
                <Cell $note={note}><CellValue text={de} /></Cell>
                {columns.slice(9).map((c) => (
                  <Cell key={c} $note={note && c === 'L'}>
                    {c === 'L' && fr && <CellValue text={fr} />}
                  </Cell>
                ))}
              </Fragment>
            )
          })}
        </SheetGrid>
      </Sheet>
      <VScroll>
        <ScrollEnd $h={15}><Arrow $dir="up" /></ScrollEnd>
        <VThumb />
        <ScrollFill />
        <ScrollEnd $h={15}><Arrow $dir="down" /></ScrollEnd>
      </VScroll>
    </SheetArea>

    <SheetTabs>
      <TabNav>
        <NavArrow />
        <NavArrow $next />
      </TabNav>
      {sheets.map(([name, w]) => (
        <SheetTab key={name} $w={w}>{name}</SheetTab>
      ))}
      <SheetTab $active $w={88}>Dictionary</SheetTab>
      <AddSheet><PlusIcon /></AddSheet>
      <TabGrip><span /><span /><span /></TabGrip>
      <HScroll>
        <ScrollEnd $w={14}><Arrow $dir="left" /></ScrollEnd>
        <HThumb />
        <ScrollFill />
        <ScrollEnd $w={14}><Arrow $dir="right" /></ScrollEnd>
      </HScroll>
    </SheetTabs>

    <StatusBar>
      READY
      <StatusRight>
        <ViewButton $active><NormalViewIcon /></ViewButton>
        <ViewButton><PageViewIcon /></ViewButton>
        <ViewButton><BreakViewIcon /></ViewButton>
        <ZoomSlider>
          <ZoomSign>-</ZoomSign>
          <ZoomTrack><ZoomThumb /><ZoomTick /></ZoomTrack>
          <ZoomSign>+</ZoomSign>
        </ZoomSlider>
        <ZoomValue>85%</ZoomValue>
      </StatusRight>
    </StatusBar>
  </Window>
)

export default App
